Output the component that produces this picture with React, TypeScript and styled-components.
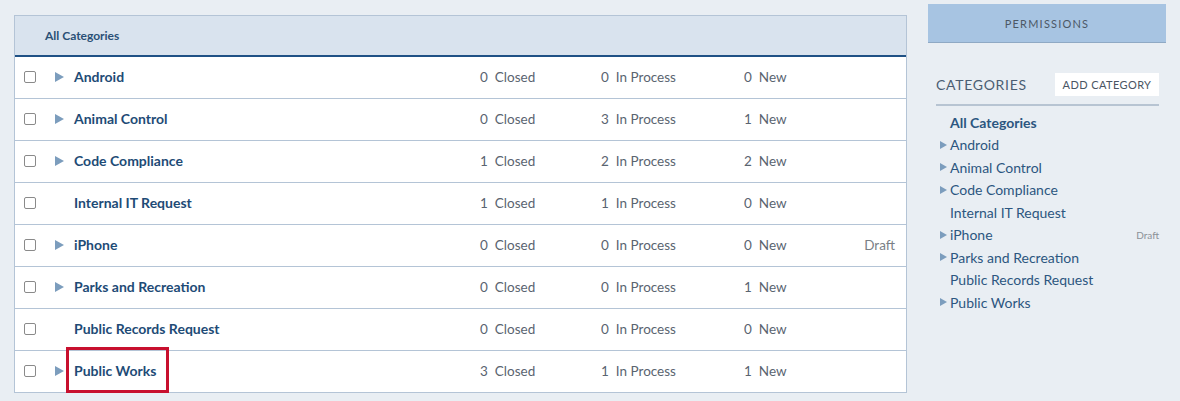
import React from 'react';
import styled, { createGlobalStyle } from 'styled-components';

const GlobalStyle = createGlobalStyle`
  html, body {
    margin: 0;
    padding: 0;
    background: #e9eef3;
  }
  body {
    font-family: Lato, "Noto Sans", sans-serif;
    color: #1f4a72;
  }
`;

type Category = {
  name: string;
  closed: number;
  inProcess: number;
  fresh: number;
  children?: boolean;
  draft?: boolean;
  highlighted?: boolean;
};

const categories: Category[] = [
  { name: 'Android', closed: 0, inProcess: 0, fresh: 0, children: true },
  { name: 'Animal Control', closed: 0, inProcess: 3, fresh: 1, children: true },
  { name: 'Code Compliance', closed: 1, inProcess: 2, fresh: 2, children: true },
  { name: 'Internal IT Request', closed: 1, inProcess: 1, fresh: 0 },
  { name: 'iPhone', closed: 0, inProcess: 0, fresh: 0, children: true, draft: true },
  { name: 'Parks and Recreation', closed: 0, inProcess: 0, fresh: 1, children: true },
  { name: 'Public Records Request', closed: 0, inProcess: 0, fresh: 0 },
  { name: 'Public Works', closed: 3, inProcess: 1, fresh: 1, children: true, highlighted: true }
];

const Page = styled.div`
  display: flex;
  align-items: flex-start;
  padding: 15px 14px 9px 14px;
  gap: 21px;
  width: 1180px;
  box-sizing: border-box;
`;

const TablePanel = styled.section`
  width: 893px;
  flex: none;
  background: #fff;
  border: 1px solid #b4c4d6;
  box-sizing: border-box;
`;

const TableHead = styled.header`
  height: 39px;
  display: flex;
  align-items: center;
  padding-left: 30px;
  background: #d9e3ee;
  border-bottom: 2px solid #1f5185;
  font-size: 12px;
  font-weight: 700;
  color: #2a5076;
`;

const Row = styled.div`
  display: grid;
  grid-template-columns: 40px 19px 406px 121px 143px 100px 1fr;
  align-items: center;
  height: 42px;
  padding-bottom: 2px;
  border-top: 1px solid #b4c4d6;
  box-sizing: border-box;
  &:first-of-type {
    border-top: none;
    height: 41px;
  }
`;

const CheckBox = styled.span`
  justify-self: start;
  margin-left: 9px;
  width: 10px;
  height: 10px;
  border: 1px solid #8a8a8a;
  border-radius: 2px;
  background: #fff;
`;

const Arrow = styled.span<{ $small?: boolean }>`
  justify-self: start;
  width: 0;
  height: 0;
  border-top: ${(p) => (p.$small ? 4 : 5)}px solid transparent;
  border-bottom: ${(p) => (p.$small ? 4 : 5)}px solid transparent;
  border-left: ${(p) => (p.$small ? 7 : 9)}px solid #7c9dbd;
`;

const NameCell = styled.div<{ $highlighted?: boolean }>`
  position: relative;
  align-self: stretch;
  display: flex;
  align-items: center;
  font-size: 14px;
  font-weight: 700;
  color: #1e4b76;
  ${(p) =>
    p.$highlighted &&
    `
    &::after {
      content: '';
      position: absolute;
      left: -8px;
      top: -4px;
      bottom: -3px;
      width: 103px;
      box-sizing: border-box;
      border: 3px solid #c8102e;
    }
  `}
`;

const Count = styled.span`
  font-size: 13.5px;
  color: #5a6470;
  display: flex;
  gap: 7px;
  & b {
    font-weight: 400;
  }
`;

const Draft = styled.span`
  justify-self: end;
  margin-right: 11px;
  font-size: 13.5px;
  color: #7a7f86;
`;

const Sidebar = styled.aside`
  width: 238px;
  flex: none;
  margin-top: -11px;
`;

const PermissionsButton = styled.button`
  display: block;
  width: 100%;
  height: 39px;
  background: #a7c4e2;
  border: none;
  border-bottom: 1px solid #8fa9c4;
  font-family: Lato, sans-serif;
  font-size: 11px;
  letter-spacing: 1.2px;
  color: #4c5866;
`;

const SideHead = styled.div`
  display: flex;
  align-items: center;
  justify-content: space-between;
  margin: 30px 7px 0 8px;
  padding-bottom: 8px;
  border-bottom: 2px solid #b7c4d2;
`;

const SideTitle = styled.span`
  font-size: 14px;
  letter-spacing: 0.7px;
  color: #4a5d72;
`;

const AddButton = styled.button`
  background: #fff;
  border: none;
  height: 23px;
  width: 104px;
  padding: 0;
  font-family: Lato, sans-serif;
  font-size: 11px;
  letter-spacing: 0.4px;
  color: #4a5563;
`;

const SideList = styled.ul`
  list-style: none;
  margin: 5px 7px 0 12px;
  padding: 0;
`;

const SideItem = styled.li<{ $bold?: boolean }>`
  display: grid;
  grid-template-columns: 10px 1fr auto;
  align-items: center;
  height: 22.5px;
  font-size: 14px;
  font-weight: ${(p) => (p.$bold ? 700 : 400)};
  color: #2c5680;
`;

const SideDraft = styled.span`
  font-size: 10px;
  color: #8c9197;
`;

export default function App() {
  return (
    <>
      <GlobalStyle />
      <Page>
        <TablePanel>
          <TableHead>All Categories</TableHead>
          {categories.map((c) => (
            <Row key={c.name}>
              <CheckBox />
              {c.children ? <Arrow /> : <span />}
              <NameCell $highlighted={c.highlighted}>{c.name}</NameCell>
              <Count>
                <b>{c.closed}</b> Closed
              </Count>
              <Count>
                <b>{c.inProcess}</b> In Process
              </Count>
              <Count>
                <b>{c.fresh}</b> New
              </Count>
              {c.draft ? <Draft>Draft</Draft> : <span />}
            </Row>
          ))}
        </TablePanel>
        <Sidebar>
          <PermissionsButton>PERMISSIONS</PermissionsButton>
          <SideHead>
            <SideTitle>CATEGORIES</SideTitle>
            <AddButton>ADD CATEGORY</AddButton>
          </SideHead>
          <SideList>
            <SideItem $bold>
              <span />
              All Categories
              <span />
            </SideItem>
            {categories.map((c) => (
              <SideItem key={c.name}>
                {c.children ? <Arrow $small /> : <span />}
                <span>{c.name}</span>
                {c.draft ? <SideDraft>Draft</SideDraft> : <span />}
              </SideItem>
            ))}
          </SideList>
        </Sidebar>
      </Page>
    </>
  );
}
